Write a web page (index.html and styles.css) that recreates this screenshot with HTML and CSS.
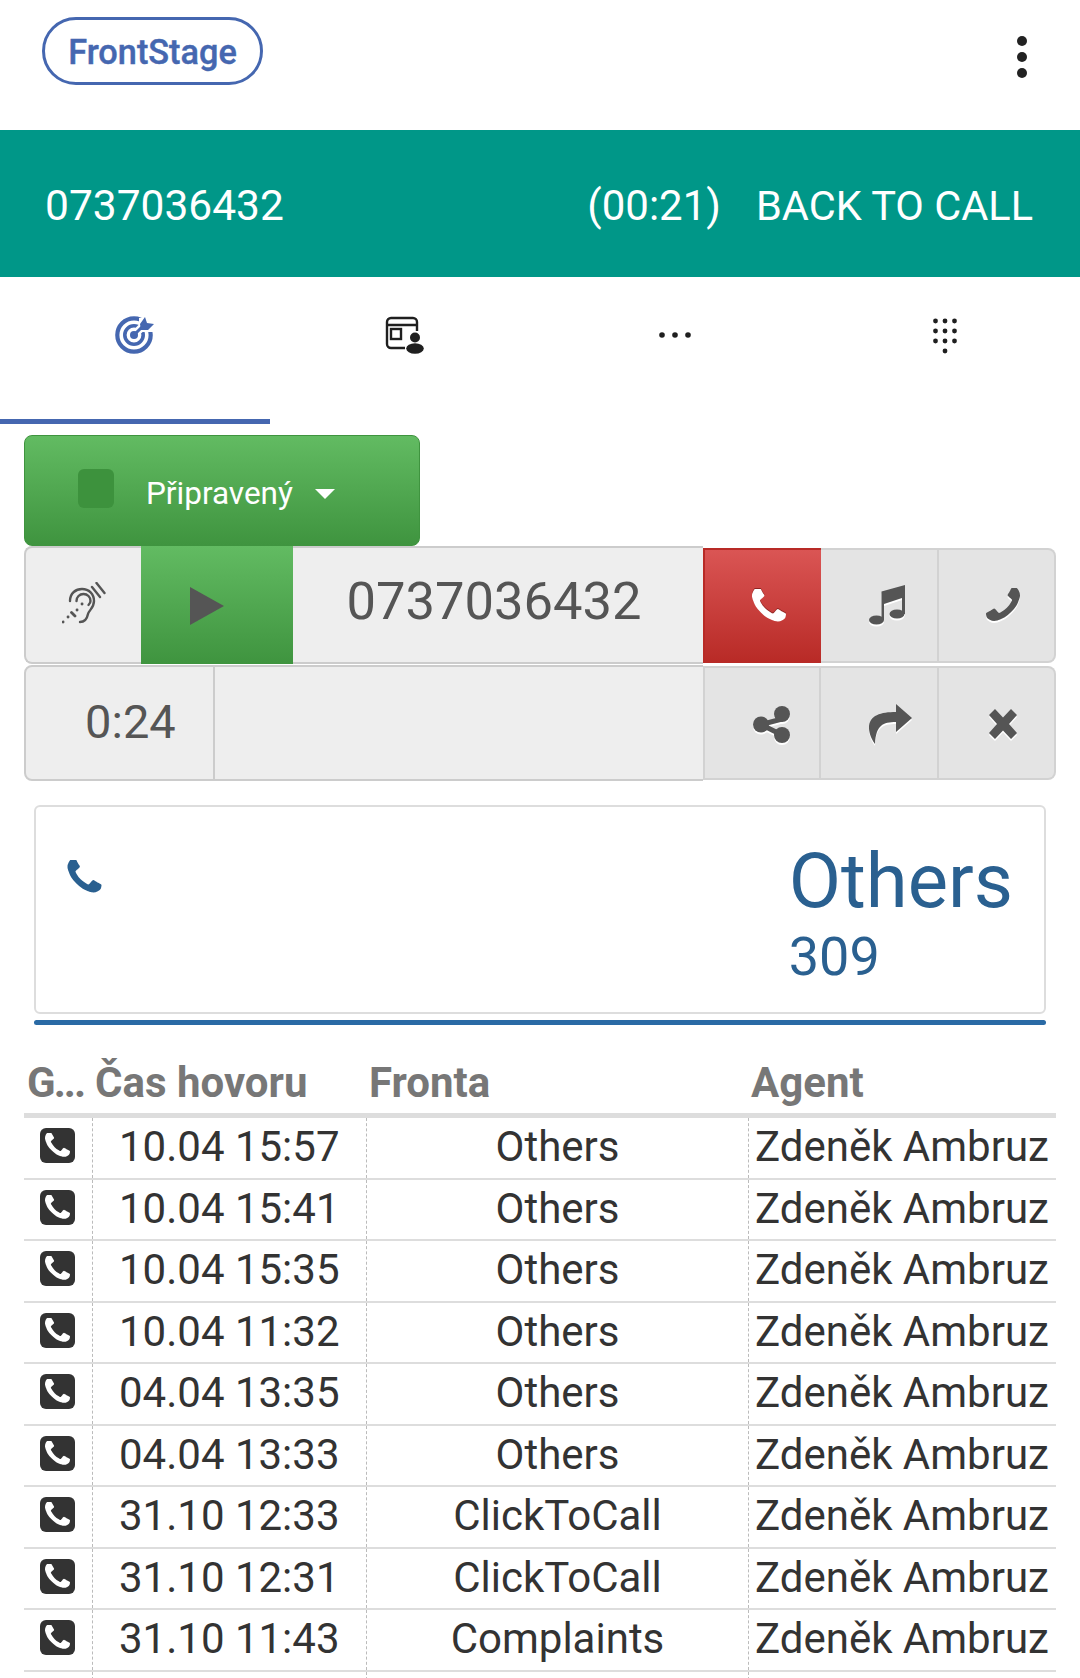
FILE: index.html
```html
<!DOCTYPE html>
<html lang="cs">
<head>
<meta charset="utf-8">
<title>FrontStage</title>
<link rel="stylesheet" href="styles.css">
</head>
<body>
<svg class="defs" width="0" height="0" aria-hidden="true">
  <symbol id="phone" viewBox="192 192 1408 1408"><path d="M1600 1240q0 27-10 70.5t-21 68.5q-21 50-122 106-94 51-186 51-27 0-53-3.5t-57.5-12.5-47-14.5-55.5-20.5-49-18q-98-35-175-83-127-79-264-216t-216-264q-48-77-83-175-3-9-18-49t-20.5-55.5-14.5-47-12.5-57.5-3.5-53q0-92 51-186 56-101 106-122 25-11 68.5-21t70.5-10q14 0 21 3 18 6 53 76 11 19 30 54t35 63.5 31 53.5q3 4 17.5 25t21.5 35.5 7 28.5q0 20-28.5 50t-62 55-62 53-28.5 46q0 9 5 22.5t8.5 20.5 14 24 11.5 19q76 137 174 235t235 174q2 1 19 11.5t24 14 20.5 8.5 22.5 5q18 0 46-28.5t53-62 55-62 50-28.5q14 0 28.5 7t35.5 21.5 25 17.5q25 15 53.5 31t63.5 35 54 30q70 35 76 53 3 7 3 21z"/></symbol>
  <symbol id="phone-square" viewBox="0 0 35 35"><rect width="35" height="35" rx="6"/><svg x="5" y="5" width="25" height="25" viewBox="192 192 1408 1408"><path fill="#fff" d="M1600 1240q0 27-10 70.5t-21 68.5q-21 50-122 106-94 51-186 51-27 0-53-3.5t-57.5-12.5-47-14.5-55.5-20.5-49-18q-98-35-175-83-127-79-264-216t-216-264q-48-77-83-175-3-9-18-49t-20.5-55.5-14.5-47-12.5-57.5-3.5-53q0-92 51-186 56-101 106-122 25-11 68.5-21t70.5-10q14 0 21 3 18 6 53 76 11 19 30 54t35 63.5 31 53.5q3 4 17.5 25t21.5 35.5 7 28.5q0 20-28.5 50t-62 55-62 53-28.5 46q0 9 5 22.5t8.5 20.5 14 24 11.5 19q76 137 174 235t235 174q2 1 19 11.5t24 14 20.5 8.5 22.5 5q18 0 46-28.5t53-62 55-62 50-28.5q14 0 28.5 7t35.5 21.5 25 17.5q25 15 53.5 31t63.5 35 54 30q70 35 76 53 3 7 3 21z"/></svg></symbol>
</svg>

<header class="topbar">
  <div class="logo">FrontStage</div>
  <svg class="kebab" width="10" height="42" viewBox="0 0 10 42"><circle cx="5" cy="5" r="5"/><circle cx="5" cy="21" r="5"/><circle cx="5" cy="37" r="5"/></svg>
</header>

<div class="callbar">
  <span class="callbar-num">0737036432</span>
  <span class="callbar-time">(00:21)</span>
  <span class="callbar-back">BACK TO CALL</span>
</div>

<nav class="tabs">
  <div class="tab tab-active">
    <svg width="39" height="38" viewBox="0 0 39 38">
      <g fill="none" stroke="#4567b0">
        <circle cx="19" cy="19" r="16.7" stroke-width="4.2"/>
        <circle cx="19" cy="19" r="9.2" stroke-width="3.6"/>
      </g>
      <path d="M19 19L29 9" stroke="#fff" stroke-width="8" fill="none"/>
      <path d="M24 2h15v14h-15z" fill="#fff"/>
      <circle cx="19" cy="19" r="4" fill="#4567b0"/>
      <path d="M19 19L28 10" stroke="#4567b0" stroke-width="3" fill="none"/>
      <path d="M25 8L30 1L32 7L39 8L33 14L26 14z" fill="#4567b0"/>
    </svg>
  </div>
  <div class="tab">
    <svg width="39" height="38" viewBox="0 0 39 38" fill="#1f1f1f">
      <path d="M20 32H6a4 4 0 0 1-4-4V6a4 4 0 0 1 4-4H28a4 4 0 0 1 4 4V15M2 9H32" fill="none" stroke="#1f1f1f" stroke-width="2.4"/>
      <rect x="6" y="13" width="10" height="10" fill="none" stroke="#1f1f1f" stroke-width="2.4"/>
      <circle cx="30" cy="21.5" r="5"/>
      <ellipse cx="30" cy="32.5" rx="8.8" ry="5.2"/>
    </svg>
  </div>
  <div class="tab">
    <svg width="32" height="6" viewBox="0 0 32 6" fill="#1f1f1f"><circle cx="3" cy="3" r="2.8"/><circle cx="16" cy="3" r="2.8"/><circle cx="29" cy="3" r="2.8"/></svg>
  </div>
  <div class="tab">
    <svg width="24" height="36" viewBox="0 0 24 36" fill="#1f1f1f">
      <circle cx="2.5" cy="3" r="2.4"/><circle cx="12" cy="3" r="2.4"/><circle cx="21.5" cy="3" r="2.4"/>
      <circle cx="2.5" cy="13" r="2.4"/><circle cx="12" cy="13" r="2.4"/><circle cx="21.5" cy="13" r="2.4"/>
      <circle cx="2.5" cy="23" r="2.4"/><circle cx="12" cy="23" r="2.4"/><circle cx="21.5" cy="23" r="2.4"/>
      <circle cx="12" cy="33" r="2.4"/>
    </svg>
  </div>
</nav>

<main class="content">
  <div class="status-btn">
    <span class="status-square"></span>
    <span class="status-label">Připravený</span>
    <span class="caret"></span>
  </div>

  <div class="ctrl-row">
    <div class="cell cell-first cell-ear">
      <svg width="44" height="44" viewBox="0 0 44 44" fill="none" stroke="#555" stroke-width="2.4" stroke-linecap="round">
        <path d="M8 19C8 11 14 7 20 7C27 7 32 12 32 19C32 26 27 28 26 32C25 37 23 40 18 40"/>
        <path d="M14.500 19c0-4 3-7 7-7 4 0 7 3 7 7 0 2-1 3-2 4"/>
        <path d="M30 5l8 10M34.500 1l8 10"/>
        <path d="M1 40h.1M6 35h.1M9.500 30.500l3.500 3.500M15 28h.1M20 22h.1" stroke-width="2.8"/>
      </svg>
    </div>
    <div class="cell cell-play">
      <span class="play"></span>
    </div>
    <div class="cell cell-num"><span class="num-text">0737036432</span></div>
    <div class="btn btn-red">
      <svg class="ico-red" width="34" height="34"><use href="#phone"/></svg>
    </div>
    <div class="btn btn-div">
      <svg class="ico" width="36" height="40" viewBox="0 0 36 40"><path d="M12.500 6.500L36 0V29h-3V13L15 19V35h-2.500z"/><ellipse cx="7.500" cy="35" rx="7.500" ry="4.600"/><ellipse cx="28" cy="29" rx="7.500" ry="4.600"/></svg>
    </div>
    <div class="btn btn-last">
      <svg class="ico flip" width="34" height="35"><use href="#phone"/></svg>
    </div>
  </div>

  <div class="ctrl-row ctrl-row-2">
    <div class="cell cell-first cell-time"><span class="time-text">0:24</span></div>
    <div class="cell cell-empty"></div>
    <div class="btn btn-div btn-lead">
      <svg class="ico" width="37" height="37" viewBox="0 0 37 37"><path d="M29 13L8 18.500 29 29" fill="none" stroke="#555" stroke-width="5"/><circle cx="29" cy="8" r="8"/><circle cx="8" cy="18.500" r="8"/><circle cx="29" cy="29" r="8"/></svg>
    </div>
    <div class="btn btn-div">
      <svg class="ico" width="43" height="40" viewBox="0 0 43 40"><path d="M27 0L43 14 27 28V18C14 18 7 21 6 40 1 33 0 27 0 24 0 11 12 8 27 8z"/></svg>
    </div>
    <div class="btn btn-last">
      <svg class="ico" width="28" height="30" viewBox="0 0 28 30"><path d="M6 0L14 8.500 22 0 28 6 20 15 28 24 22 30 14 21.500 6 30 0 24 8 15 0 6z"/></svg>
    </div>
  </div>

  <section class="queue-wrap">
    <div class="queue-card">
      <svg class="queue-phone" width="35" height="34"><use href="#phone"/></svg>
      <div class="queue-info">
        <div class="queue-name">Others</div>
        <div class="queue-count">309</div>
      </div>
    </div>
    <div class="queue-bar"></div>
  </section>

  <div class="table">
    <div class="thead">
      <div class="th th-g">G...</div>
      <div class="th">Čas hovoru</div>
      <div class="th">Fronta</div>
      <div class="th">Agent</div>
    </div>
    <div class="tr"><div class="td td-ico"><svg class="sq" width="35" height="35"><use href="#phone-square"/></svg></div><div class="td td-time">10.04 15:57</div><div class="td td-queue">Others</div><div class="td td-agent">Zdeněk Ambruz</div></div>
    <div class="tr"><div class="td td-ico"><svg class="sq" width="35" height="35"><use href="#phone-square"/></svg></div><div class="td td-time">10.04 15:41</div><div class="td td-queue">Others</div><div class="td td-agent">Zdeněk Ambruz</div></div>
    <div class="tr"><div class="td td-ico"><svg class="sq" width="35" height="35"><use href="#phone-square"/></svg></div><div class="td td-time">10.04 15:35</div><div class="td td-queue">Others</div><div class="td td-agent">Zdeněk Ambruz</div></div>
    <div class="tr"><div class="td td-ico"><svg class="sq" width="35" height="35"><use href="#phone-square"/></svg></div><div class="td td-time">10.04 11:32</div><div class="td td-queue">Others</div><div class="td td-agent">Zdeněk Ambruz</div></div>
    <div class="tr"><div class="td td-ico"><svg class="sq" width="35" height="35"><use href="#phone-square"/></svg></div><div class="td td-time">04.04 13:35</div><div class="td td-queue">Others</div><div class="td td-agent">Zdeněk Ambruz</div></div>
    <div class="tr"><div class="td td-ico"><svg class="sq" width="35" height="35"><use href="#phone-square"/></svg></div><div class="td td-time">04.04 13:33</div><div class="td td-queue">Others</div><div class="td td-agent">Zdeněk Ambruz</div></div>
    <div class="tr"><div class="td td-ico"><svg class="sq" width="35" height="35"><use href="#phone-square"/></svg></div><div class="td td-time">31.10 12:33</div><div class="td td-queue">ClickToCall</div><div class="td td-agent">Zdeněk Ambruz</div></div>
    <div class="tr"><div class="td td-ico"><svg class="sq" width="35" height="35"><use href="#phone-square"/></svg></div><div class="td td-time">31.10 12:31</div><div class="td td-queue">ClickToCall</div><div class="td td-agent">Zdeněk Ambruz</div></div>
    <div class="tr"><div class="td td-ico"><svg class="sq" width="35" height="35"><use href="#phone-square"/></svg></div><div class="td td-time">31.10 11:43</div><div class="td td-queue">Complaints</div><div class="td td-agent">Zdeněk Ambruz</div></div>
    <div class="tr"><div class="td td-ico"></div><div class="td td-time"></div><div class="td td-queue"></div><div class="td td-agent"></div></div>
  </div>
</main>
</body>
</html>
```
FILE: styles.css
```css
* { box-sizing: border-box; }
html, body { margin: 0; padding: 0; }
body {
  width: 1080px;
  height: 1678px;
  overflow: hidden;
  background: #fff;
  font-family: Roboto, "Liberation Sans", sans-serif;
  color: #333;
}
.defs { position: absolute; }

.topbar {
  height: 130px;
  display: flex;
  justify-content: space-between;
  align-items: flex-start;
  padding: 17px 53px 0 42px;
}
.logo {
  width: 221px;
  height: 68px;
  border: 3px solid #4567b0;
  border-radius: 34px;
  color: #4567b0;
  font-size: 34.3px;
  font-weight: 500;
  -webkit-text-stroke: 0.4px #4567b0;
  display: flex;
  align-items: center;
  justify-content: center;
  padding-top: 2px;
}
.kebab { margin-top: 19px; fill: #222; }

.callbar {
  height: 147px;
  background: #009788;
  color: #fff;
  font-size: 42px;
  display: flex;
  align-items: center;
  padding: 4px 47px 0 45px;
  gap: 35px;
}
.callbar-num { margin-right: auto; font-size: 42.500px; }
.callbar-back { font-size: 41.500px; }

.tabs {
  height: 147px;
  display: grid;
  grid-template-columns: repeat(4, 270px);
}
.tab {
  display: flex;
  justify-content: center;
  align-items: flex-start;
  padding: 39px 2px 0 0;
  height: 147px;
}
.tab:nth-child(3) { padding: 55px 0 0; }
.tab:nth-child(4) { padding: 41px 0 0; }
.tab-active { border-bottom: 5px solid #4567b0; }

.content { padding: 11px 24px 0; }

.status-btn {
  width: 396px;
  height: 111px;
  border: 1px solid #3f943f;
  border-radius: 8px;
  background: linear-gradient(#62bb62, #3f943f);
  display: flex;
  align-items: center;
  padding: 0 0 0 53px;
  color: #fff;
}
.status-square {
  width: 36px;
  height: 39px;
  border-radius: 6px;
  background: #3d923d;
  margin-bottom: 5px;
}
.status-label {
  font-size: 31.500px;
  margin: 6px 0 0 32px;
}
.caret {
  width: 0;
  height: 0;
  border-left: 10px solid transparent;
  border-right: 10px solid transparent;
  border-top: 10px solid #fff;
  margin-left: 22px;
  margin-top: 6px;
}

.ctrl-row {
  display: flex;
  align-items: center;
  height: 118px;
}
.ctrl-row-2 {
  margin-top: 1px;
  height: 116px;
}
.ctrl-row-2 .cell { height: 116px; }
.ctrl-row-2 .btn {
  height: 114px;
  padding-top: 2px;
}
.cell {
  height: 118px;
  background: #eee;
  border-top: 2px solid #ccc;
  border-bottom: 2px solid #ccc;
  display: flex;
  align-items: center;
  justify-content: center;
  color: #555;
}
.cell-first {
  border-left: 2px solid #ccc;
  border-radius: 8px 0 0 8px;
}
.cell-ear {
  width: 117px;
  justify-content: flex-start;
  padding: 0 0 3px 36px;
}
.cell-play {
  width: 152px;
  border: 0;
  background: linear-gradient(#62bb62, #3f943f);
  justify-content: flex-start;
  padding: 2px 0 0 49px;
}
.play {
  width: 0;
  height: 0;
  border-top: 19px solid transparent;
  border-bottom: 19px solid transparent;
  border-left: 34px solid #555;
}
.cell-num {
  width: 410px;
  font-size: 52.500px;
  padding: 0 8px 8px 0;
}
.cell-time {
  width: 191px;
  font-size: 47px;
  border-right: 2px solid #ccc;
  padding: 0 0 4px 22px;
}
.cell-empty { width: 489px; }

.btn {
  height: 115px;
  width: 118px;
  background: #e4e4e4;
  border-top: 2px solid #d2d2d2;
  border-bottom: 2px solid #d2d2d2;
  display: flex;
  align-items: center;
  justify-content: center;
}
.btn-red {
  background: linear-gradient(#da5554, #b82a26);
  border: 0;
  border-top: 2px solid #b82a26;
  border-left: 2px solid #b82a26;
  padding-left: 12px;
}
.ico-red { fill: #fff; filter: drop-shadow(0 -1px 0 #8f2320); }
.btn-div {
  border-right: 2px solid #d2d2d2;
  padding-left: 15px;
}
.btn-lead {
  border-left: 2px solid #d2d2d2;
  width: 118px;
  padding-left: 18px;
}
.btn-div + .btn-div { padding-left: 22px; }
.btn-last {
  width: 117px;
  border-right: 2px solid #d2d2d2;
  border-radius: 0 8px 8px 0;
  padding-left: 13px;
}
.ico {
  fill: #555;
  filter: drop-shadow(0 2px 0 #fff);
}
.flip { transform: scaleX(-1); }

.queue-wrap { padding: 24px 10px 0; }
.queue-card {
  height: 209px;
  border: 2px solid #ddd;
  border-radius: 6px;
  display: flex;
  justify-content: space-between;
  padding: 53px 31px 0 31px;
}
.queue-phone { fill: #2a6090; }
.queue-info {
  color: #2a6090;
  margin-top: -19px;
}
.queue-name { font-size: 76px; line-height: 80px; }
.queue-count {
  font-size: 54px;
  line-height: 62px;
  margin-top: 5px;
}
.queue-bar {
  height: 5px;
  background: #2a6aa5;
  border-radius: 3px;
  margin-top: 6px;
}

.table { margin-top: 0; }
.thead, .tr {
  display: grid;
  grid-template-columns: 68px 274px 382px 308px;
}
.thead {
  height: 93px;
  border-bottom: 5px solid #ddd;
  align-items: end;
}
.th {
  font-size: 42px;
  font-weight: 700;
  color: #777;
  padding: 0 0 7px 3px;
  line-height: 47px;
  white-space: nowrap;
}
.th-g { letter-spacing: -2px; }
.tr {
  height: 61.5px;
  border-bottom: 2px solid #ddd;
}
.td {
  border-left: 1px dashed #bbb;
  font-size: 42px;
  line-height: 57px;
  color: #333;
  white-space: nowrap;
}
.td-ico {
  border-left: 0;
  display: flex;
  align-items: flex-start;
  padding: 10px 0 0 16px;
}
.sq { fill: #333; }
.td-time { padding-left: 26px; }
.td-queue { text-align: center; }
.td-agent { padding-left: 6px; }
```
